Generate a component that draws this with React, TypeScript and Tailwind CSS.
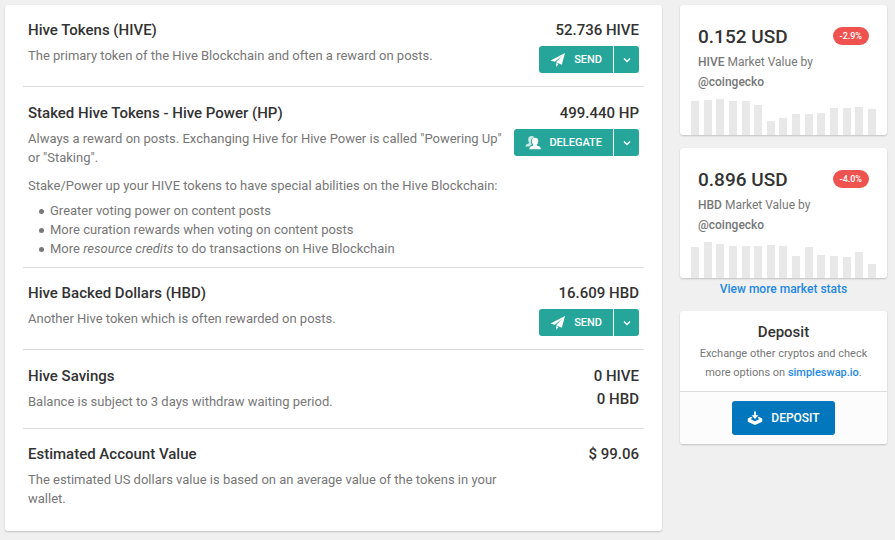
import type { ReactNode } from "react";

const hiveBars = [34, 35, 36, 34, 34, 30, 14, 17, 21, 21, 22, 27, 27, 28, 26];
const hbdBars = [31, 36, 34, 32, 32, 32, 33, 32, 22, 31, 23, 22, 21, 26, 14];

const stakeBenefits: ReactNode[] = [
  "Greater voting power on content posts",
  "More curation rewards when voting on content posts",
  <>
    More <em>resource credits</em> to do transactions on Hive Blockchain
  </>,
];

function PlaneIcon() {
  return (
    <svg className="h-4 w-4" viewBox="0 0 16 16" fill="currentColor" aria-hidden="true">
      <path d="M15 1 .6 8.4l4.200 1.400L12.400 3.600 6 10.300l5.800 2.500z" />
      <path d="M6.200 11v3.900l2.300-2.800z" />
    </svg>
  );
}

function UsersIcon() {
  return (
    <svg className="h-4 w-4" viewBox="0 0 16 16" fill="currentColor" aria-hidden="true">
      <path
        opacity="0.75"
        d="M6.400 1c1.600 0 2.700.7 3.100 1.700C7.200 2.800 5.900 4.200 5.900 6.500c0 1.400.3 2.400 1 3.200-1.200.4-2.200 1-2.800 1.900H.5c0-1.700 1.100-2.600 3.100-3.100.5-.1.600-.6.300-1C3.400 6.600 3.200 5.500 3.200 4.500 3.200 2.300 4.400 1 6.400 1z"
      />
      <path d="M10 2.700c2.100 0 3.300 1.200 3.300 3.400 0 1.500-.5 2.700-1.300 3.500-.4.500-.2 1 .4 1.200 2.400.5 3.500 1.500 3.500 3.500H4.300c0-2 1.200-3 3.500-3.500.6-.2.800-.7.400-1.200C7.400 8.800 6.800 7.600 6.800 6.100c0-2.200 1.100-3.400 3.200-3.400z" />
    </svg>
  );
}

function DepositIcon() {
  return (
    <svg className="h-4 w-4" viewBox="0 0 16 16" fill="currentColor" aria-hidden="true">
      <path d="M7.100 1.500h1.800v3.700h2.600L8 8.900 4.500 5.200h2.600z" />
      <path d="M4.200 6.700.8 8.600v3.100L8 15l7.200-3.300V8.600l-3.400-1.900-1.200 1.200 2 1.100L8 11.200 3.400 9l2-1.100z" />
    </svg>
  );
}

function SplitButton({ icon, label }: { icon: ReactNode; label: string }) {
  return (
    <div className="flex h-[27px] gap-px text-white">
      <button className="flex items-center gap-2 rounded-l-[3px] bg-[#26a69a] px-[11px] text-[11px] font-medium uppercase">
        {icon}
        {label}
      </button>
      <button
        className="flex w-[25px] items-center justify-center rounded-r-[3px] bg-[#26a69a]"
        aria-label={`More ${label} options`}
      >
        <svg
          className="h-2 w-2"
          viewBox="0 0 8 8"
          fill="none"
          stroke="currentColor"
          strokeWidth="1.4"
          aria-hidden="true"
        >
          <path d="M1 2.500 4 5.500 7 2.500" />
        </svg>
      </button>
    </div>
  );
}

interface RowProps {
  title: string;
  amounts: string[];
  action?: ReactNode;
  className: string;
  children: ReactNode;
}

function Row({ title, amounts, action, className, children }: RowProps) {
  return (
    <section className={`flex justify-between border-[#ddd] px-[5px] ${className}`}>
      <div className="min-w-0 max-w-[476px]">
        <h2 className="mb-1 text-[15px] leading-6 font-medium text-[#333]">{title}</h2>
        {children}
      </div>
      <div className="flex shrink-0 flex-col items-end gap-1 pt-px">
        <div className="text-right text-[15px] leading-[23px] font-medium text-[#333]">
          {amounts.map((a) => (
            <p key={a}>{a}</p>
          ))}
        </div>
        {action}
      </div>
    </section>
  );
}

interface MarketCardProps {
  price: string;
  symbol: string;
  change: string;
  bars: number[];
}

function MarketCard({ price, symbol, change, bars }: MarketCardProps) {
  return (
    <section className="rounded-[3px] bg-white pt-5 shadow-[0_1px_2px_rgba(0,0,0,0.2)]">
      <div className="flex items-start justify-between px-[18px]">
        <h3 className="text-[19px] leading-6 font-medium text-[#333]">{price}</h3>
        <span className="mt-[2px] rounded-full bg-[#ef5350] px-[7px] text-[9px] leading-[18px] font-medium text-white">
          {change}
        </span>
      </div>
      <p className="mt-[3px] px-[18px] text-[12px] leading-5">
        <span className="font-medium">{symbol}</span> Market Value by
        <br />
        <span className="font-medium">@coingecko</span>
      </p>
      {/* price history */}
      <div className="mt-[7px] flex h-9 items-end justify-between px-[11px]">
        {bars.map((h, i) => (
          <div key={i} className="w-2 bg-[#e8e8e8]" style={{ height: h }} />
        ))}
      </div>
    </section>
  );
}

export default function App() {
  return (
    <div className="flex min-h-screen items-start gap-[18px] bg-[#f0f0f0] py-[5px] pr-2 pl-[5px] font-['Roboto',sans-serif] text-[13px] leading-[19px] text-[#777]">
      <main className="flex-1 rounded-[3px] bg-white px-[18px] shadow-[0_1px_2px_rgba(0,0,0,0.2)]">
        <Row
          title="Hive Tokens (HIVE)"
          amounts={["52.736 HIVE"]}
          action={<SplitButton icon={<PlaneIcon />} label="Send" />}
          className="border-b pt-[13px] pb-[13px]"
        >
          <p>The primary token of the Hive Blockchain and often a reward on posts.</p>
        </Row>
        <Row
          title="Staked Hive Tokens - Hive Power (HP)"
          amounts={["499.440 HP"]}
          action={<SplitButton icon={<UsersIcon />} label="Delegate" />}
          className="border-b pt-[14px] pb-[9px]"
        >
          <p>Always a reward on posts. Exchanging Hive for Hive Power is called "Powering Up" or "Staking".</p>
          <p className="mt-[9px]">
            Stake/Power up your HIVE tokens to have special abilities on the Hive Blockchain:
          </p>
          <ul className="mt-[6px] pl-[11px]">
            {stakeBenefits.map((item, i) => (
              <li
                key={i}
                className="before:mr-[6px] before:inline-block before:h-[5px] before:w-[5px] before:rounded-full before:bg-[#777] before:align-middle"
              >
                {item}
              </li>
            ))}
          </ul>
        </Row>
        <Row
          title="Hive Backed Dollars (HBD)"
          amounts={["16.609 HBD"]}
          action={<SplitButton icon={<PlaneIcon />} label="Send" />}
          className="border-b pt-[13px] pb-[13px]"
        >
          <p>Another Hive token which is often rewarded on posts.</p>
        </Row>
        <Row title="Hive Savings" amounts={["0 HIVE", "0 HBD"]} className="border-b pt-[14px] pb-[17px]">
          <p>Balance is subject to 3 days withdraw waiting period.</p>
        </Row>
        <Row title="Estimated Account Value" amounts={["$ 99.06"]} className="pt-[13px] pb-[23px]">
          <p>The estimated US dollars value is based on an average value of the tokens in your wallet.</p>
        </Row>
      </main>

      <aside className="w-[207px] shrink-0">
        <div className="flex flex-col gap-[13px]">
          <MarketCard price="0.152 USD" symbol="HIVE" change="-2.9%" bars={hiveBars} />
          <MarketCard price="0.896 USD" symbol="HBD" change="-4.0%" bars={hbdBars} />
        </div>
        <a href="#market" className="mt-px block text-center text-[12px] leading-5 font-medium text-[#1e88e5]">
          View more market stats
        </a>

        <section className="mt-3 rounded-[3px] bg-white text-center shadow-[0_1px_2px_rgba(0,0,0,0.2)]">
          <div className="border-b border-[#ddd] px-4 pt-[9px] pb-[9px]">
            <h3 className="text-[15px] leading-6 font-medium text-[#333]">Deposit</h3>
            <p className="text-[11px]">
              Exchange other cryptos and check more options on{" "}
              <a href="#simpleswap" className="font-medium text-[#1e88e5]">
                simpleswap.io
              </a>
              .
            </p>
          </div>
          <div className="flex justify-center rounded-b-[3px] bg-[#fcfcfc] py-[9px]">
            <button className="flex h-[34px] items-center gap-2 rounded-[3px] bg-[#0277bd] px-[15px] text-[12px] font-medium text-white uppercase">
              <DepositIcon />
              Deposit
            </button>
          </div>
        </section>
      </aside>
    </div>
  );
}
